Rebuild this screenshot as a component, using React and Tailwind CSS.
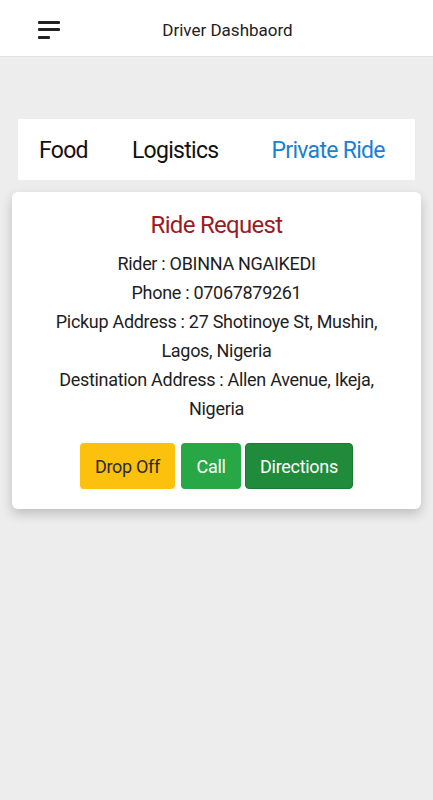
import React from 'react';

const tabs = [
  { id: 'food', label: 'Food', active: false, className: '' },
  { id: 'logistics', label: 'Logistics', active: false, className: 'ml-[44px]' },
  { id: 'private', label: 'Private Ride', active: true, className: 'ml-[53px]' },
];

const MenuIcon = () => (
  <svg width="24" height="20" viewBox="0 0 24 20" className="block">
    <rect x="0" y="1" width="22" height="3" rx="1" fill="#222" />
    <rect x="0" y="8" width="22" height="3" rx="1" fill="#222" />
    <rect x="0" y="16" width="12" height="3" rx="1" fill="#222" />
  </svg>
);

const App = () => {
  return (
    <div className="min-h-[800px] bg-[#ededed] font-['Roboto',sans-serif] text-[#212121]">
      {/* Header */}
      <div className="relative flex h-[57px] items-center justify-center bg-white border-b border-[#e2e2e2] pt-[6px]">
        <button className="absolute left-[38px] top-[20px]">
          <MenuIcon />
        </button>
        <h1 className="text-[17px] text-[#222] pl-[22px]">Driver Dashbaord</h1>
      </div>

      {/* Tabs */}
      <div className="mx-[18px] mt-[62px] flex h-[61px] items-center bg-white pl-[21px] pt-[3px]">
        {tabs.map((tab) => (
          <span
            key={tab.id}
            className={`text-[23px] tracking-[-0.7px] ${tab.className} ${tab.active ? 'text-[#1b7fd3]' : 'text-[#111]'}`}
          >
            {tab.label}
          </span>
        ))}
      </div>

      {/* Ride request card */}
      <div className="mx-[12px] mt-[12px] rounded-[6px] bg-white px-4 pt-[12px] pb-[20px] text-center shadow-[0_5px_12px_rgba(0,0,0,0.2)]">
        <h2 className="text-[24px] leading-[42px] tracking-[-0.7px] text-[#9b1b1f]">Ride Request</h2>
        <div className="mt-[3px] px-[20px] text-[18px] leading-[29px] tracking-[-0.3px] text-[#1e1e1e]">
          <p>Rider : OBINNA NGAIKEDI</p>
          <p>Phone : 07067879261</p>
          <p>Pickup Address : 27 Shotinoye St, Mushin, Lagos, Nigeria</p>
          <p>Destination Address : Allen Avenue, Ikeja, Nigeria</p>
        </div>
        <div className="mt-[20px] flex justify-center">
          <button className="h-[46px] w-[95px] rounded-[4px] bg-[#fcc10d] text-[18px] tracking-[-0.3px] text-[#2a2a2a]">
            Drop Off
          </button>
          <button className="ml-[6px] h-[46px] w-[60px] rounded-[4px] bg-[#27a745] text-[18px] tracking-[-0.3px] text-white">
            Call
          </button>
          <button className="ml-[4px] h-[46px] w-[108px] rounded-[4px] border border-[#1b7a34] bg-[#208b3a] text-[18px] tracking-[-0.3px] text-white">
            Directions
          </button>
        </div>
      </div>
    </div>
  );
};

export default App;
